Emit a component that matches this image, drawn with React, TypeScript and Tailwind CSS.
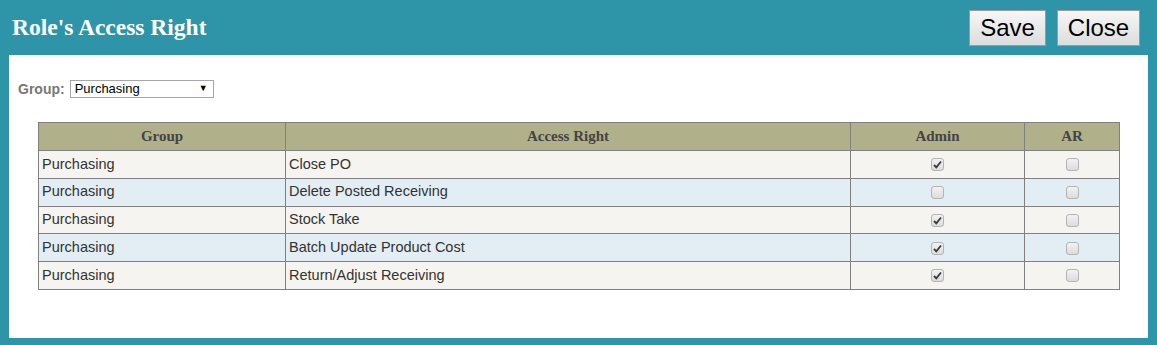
import React from "react";

const rows = [
  { g: "Purchasing", r: "Close PO", admin: true, ar: false },
  { g: "Purchasing", r: "Delete Posted Receiving", admin: false, ar: false },
  { g: "Purchasing", r: "Stock Take", admin: true, ar: false },
  { g: "Purchasing", r: "Batch Update Product Cost", admin: true, ar: false },
  { g: "Purchasing", r: "Return/Adjust Receiving", admin: true, ar: false },
];

function Box({ checked }: { checked: boolean }) {
  return (
    <span className="inline-flex h-[13px] w-[13px] items-center justify-center rounded-[3px] border border-[#b4b4b4] bg-gradient-to-b from-[#f2f2f2] to-[#dcdcdc] align-middle">
      {checked && (
        <svg width="9" height="9" viewBox="0 0 9 9">
          <path d="M1 5 L3.3 7.3 L8 1.5" fill="none" stroke="#3a3a3a" strokeWidth="1.8" />
        </svg>
      )}
    </span>
  );
}

export default function App() {
  return (
    <div className="flex h-[345px] w-[1157px] flex-col bg-[#2e94a8] font-['Liberation_Sans',Arial,sans-serif]">
      <div className="flex h-[55px] items-center justify-between pl-[12px] pr-[17px]">
        <h1 className="mt-[1px] font-['Liberation_Serif','Times_New_Roman',serif] text-[23.5px] font-bold text-white">
          Role's Access Right
        </h1>
        <div className="mt-[1px] flex gap-[11px]">
          <button className="h-[36px] w-[77px] border border-[#9a9a9a] bg-gradient-to-b from-[#f6f6f6] to-[#dddddd] text-[24px] leading-none text-black">
            Save
          </button>
          <button className="h-[36px] w-[83px] border border-[#9a9a9a] bg-gradient-to-b from-[#f6f6f6] to-[#dddddd] text-[24px] leading-none text-black">
            Close
          </button>
        </div>
      </div>
      <div className="mx-[9px] mb-[7px] flex-1 bg-white pl-[9px] pt-[24px]">
        <div className="flex h-[20px] items-center gap-[5px]">
          <span className="text-[14px] font-bold text-[#777]">Group:</span>
          <div className="flex h-[18px] w-[144px] items-center justify-between border border-[#a6a6a6] bg-white pl-[4px] pr-[5px] text-[13px] text-black">
            <span>Purchasing</span>
            <span className="text-[9px]">▼</span>
          </div>
        </div>
        <table className="ml-[20px] mt-[23px] w-[1082px] border-collapse text-[14.5px] text-[#333]">
          <thead>
            <tr className="h-[28px] bg-[#b0b08a] font-['Liberation_Serif','Times_New_Roman',serif] text-[15px] font-bold text-[#444]">
              <th className="w-[247px] border border-[#808080] font-bold">Group</th>
              <th className="w-[565px] border border-[#808080] font-bold">Access Right</th>
              <th className="w-[174px] border border-[#808080] font-bold">Admin</th>
              <th className="border border-[#808080] font-bold">AR</th>
            </tr>
          </thead>
          <tbody>
            {rows.map((row, i) => (
              <tr key={i} className={`h-[27.8px] ${i % 2 === 0 ? "bg-[#f5f4f0]" : "bg-[#e2edf4]"}`}>
                <td className="border border-[#808080] px-[3px]">{row.g}</td>
                <td className="border border-[#808080] px-[3px]">{row.r}</td>
                <td className="border border-[#808080] text-center">
                  <Box checked={row.admin} />
                </td>
                <td className="border border-[#808080] text-center">
                  <Box checked={row.ar} />
                </td>
              </tr>
            ))}
          </tbody>
        </table>
      </div>
    </div>
  );
}
